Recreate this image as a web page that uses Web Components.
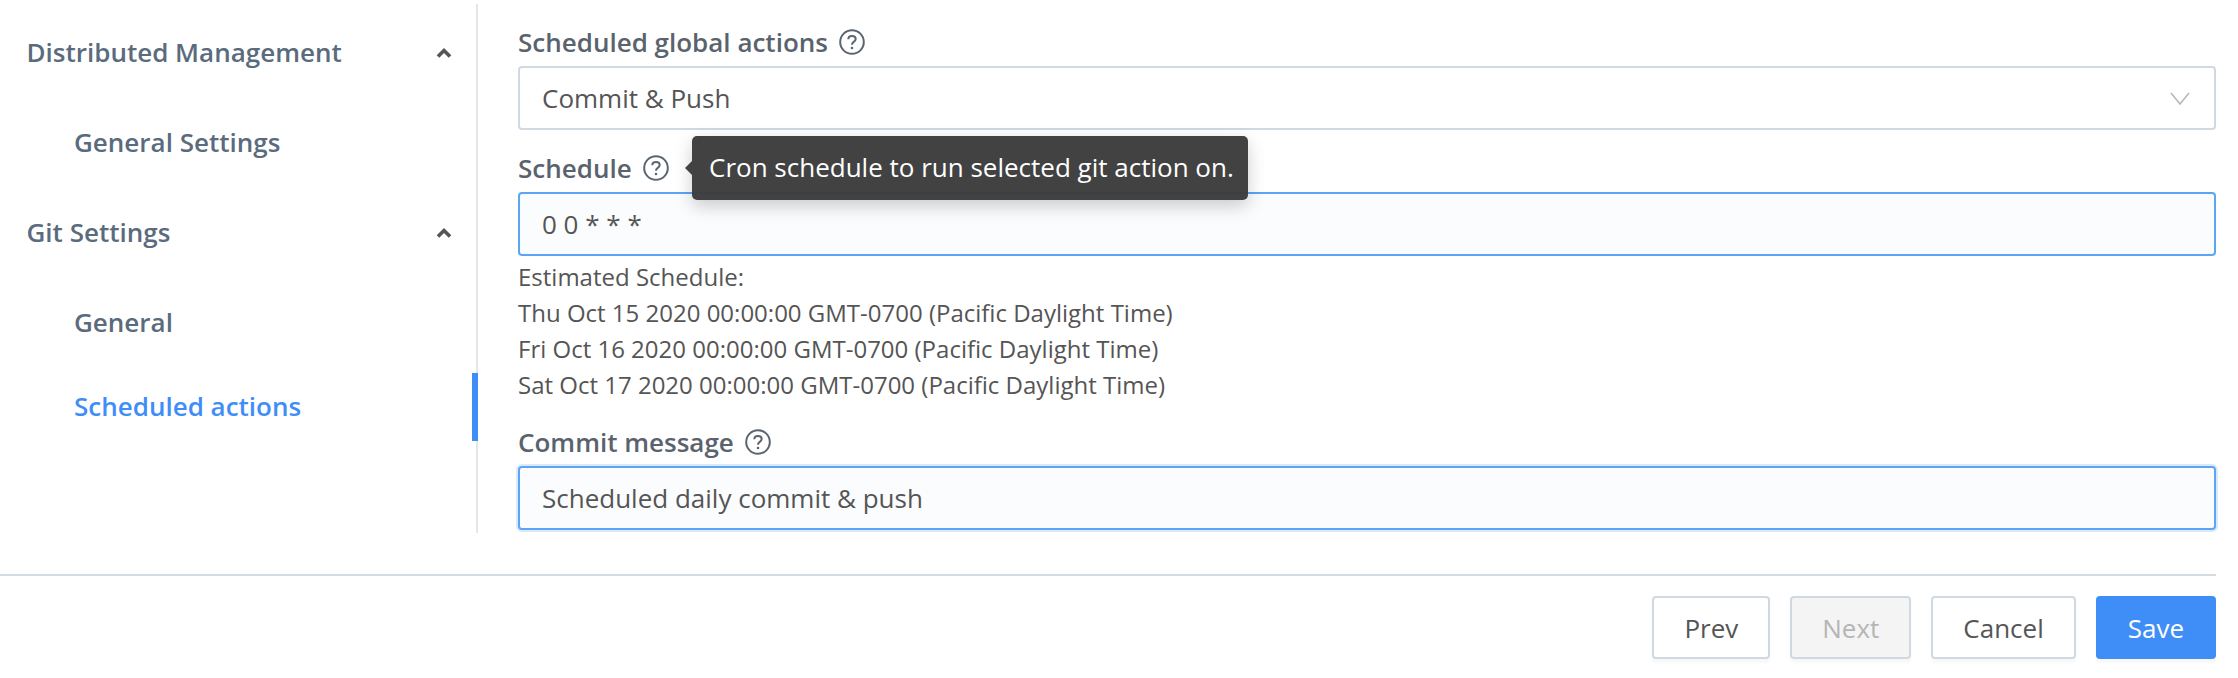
<!DOCTYPE html>
<html>
<head>
<meta charset="utf-8">
<title>Scheduled actions</title>
<style>
    html, body { margin: 0; background: #fff; }
    body { font-family: "Open Sans", "Noto Sans", sans-serif; }
</style>
</head>
<body>
<wizard-page>
    <side-nav slot="nav">
        <nav-group label="Distributed Management">
            <nav-item>General Settings</nav-item>
        </nav-group>
        <nav-group label="Git Settings">
            <nav-item>General</nav-item>
            <nav-item active>Scheduled actions</nav-item>
        </nav-group>
    </side-nav>
    <form-field slot="form" label="Scheduled global actions">
        <select-box>Commit &amp; Push</select-box>
    </form-field>
    <form-field slot="form" label="Schedule" tip="Cron schedule to run selected git action on.">
        <text-box>0 0 * * *</text-box>
        <schedule-list slot="after">
            <div>Estimated Schedule:</div>
            <div>Thu Oct 15 2020 00:00:00 GMT-0700 (Pacific Daylight Time)</div>
            <div>Fri Oct 16 2020 00:00:00 GMT-0700 (Pacific Daylight Time)</div>
            <div>Sat Oct 17 2020 00:00:00 GMT-0700 (Pacific Daylight Time)</div>
        </schedule-list>
    </form-field>
    <form-field slot="form" label="Commit message">
        <text-box glow>Scheduled daily commit &amp; push</text-box>
    </form-field>
    <wizard-button slot="footer">Prev</wizard-button>
    <wizard-button slot="footer" disabled>Next</wizard-button>
    <wizard-button slot="footer">Cancel</wizard-button>
    <wizard-button slot="footer" primary>Save</wizard-button>
</wizard-page>

<script>
class WizardPage extends HTMLElement {
    constructor() {
        super();
        this.attachShadow({ mode: 'open' }).innerHTML = `
            <style>
                :host { display: block; width: 2238px; height: 678px; overflow: hidden; }
                .body { display: flex; height: 529px; padding-top: 4px; }
                .form { flex: 1; padding: 20px 22px 0 40px; min-width: 0; }
                .line { height: 2px; margin: 41px 22px 0 0; background: #d3dbe3; }
                .footer {
                    display: flex;
                    justify-content: flex-end;
                    gap: 20px;
                    padding: 20px 22px 0 0;
                }
            </style>
            <div class="body">
                <slot name="nav"></slot>
                <div class="form"><slot name="form"></slot></div>
            </div>
            <div class="line"></div>
            <div class="footer"><slot name="footer"></slot></div>
        `;
    }
}

class SideNav extends HTMLElement {
    constructor() {
        super();
        this.attachShadow({ mode: 'open' }).innerHTML = `
            <style>
                :host {
                    display: block;
                    box-sizing: border-box;
                    flex: none;
                    width: 478px;
                    padding-top: 15px;
                    border-right: 2px solid #e6e6e6;
                }
            </style>
            <slot></slot>
        `;
    }
}

class NavGroup extends HTMLElement {
    constructor() {
        super();
        this.attachShadow({ mode: 'open' }).innerHTML = `
            <style>
                :host { display: block; margin-bottom: 22px; }
                .head {
                    display: flex;
                    align-items: center;
                    justify-content: space-between;
                    height: 68px;
                    padding: 0 24px 0 26.5px;
                    font-size: 26px;
                    font-weight: 600;
                    color: #5a6b7e;
                }
                .head span { padding-bottom: 3px; }
                svg { display: block; }
                .items { display: flex; flex-direction: column; gap: 16px; margin-top: 22px; }
            </style>
            <div class="head">
                <span>${this.getAttribute('label')}</span>
                <svg width="16" height="12" viewBox="0 0 16 12">
                    <path d="M2 9.5 L8 3.5 L14 9.5" fill="none" stroke="#565656" stroke-width="3.6"/>
                </svg>
            </div>
            <div class="items"><slot></slot></div>
        `;
    }
}

class NavItem extends HTMLElement {
    constructor() {
        super();
        const active = this.hasAttribute('active');
        this.attachShadow({ mode: 'open' }).innerHTML = `
            <style>
                :host { display: flex; height: 68px; margin-right: -2px; }
                .text {
                    flex: 1;
                    display: flex;
                    align-items: center;
                    padding: 0 0 3px 74px;
                    font-size: 26px;
                    font-weight: 600;
                    color: ${active ? '#3f8ef7' : '#5a6b7e'};
                }
                .bar { width: 6px; background: ${active ? '#3f8ef7' : 'transparent'}; }
            </style>
            <div class="text"><slot></slot></div>
            <div class="bar"></div>
        `;
    }
}

class HintIcon extends HTMLElement {
    constructor() {
        super();
        this.attachShadow({ mode: 'open' }).innerHTML = `
            <style>
                :host { display: block; width: 26px; height: 26px; flex: none; }
                svg { display: block; }
            </style>
            <svg width="26" height="26" viewBox="0 0 26 26" fill="none" stroke="#5b6570">
                <circle cx="13" cy="13" r="11.8" stroke-width="2"/>
                <path d="M9.3 10.2 C9.3 8 11 6.9 13 6.9 C15.1 6.9 16.7 8.1 16.7 10 C16.7 11.6 15.7 12.3 14.5 13.1 C13.4 13.8 13 14.4 13 15.7" stroke-width="2"/>
                <circle cx="13" cy="19" r="1.3" fill="#5b6570" stroke="none"/>
            </svg>
        `;
    }
}

class FormField extends HTMLElement {
    constructor() {
        super();
        const tip = this.getAttribute('tip');
        this.attachShadow({ mode: 'open' }).innerHTML = `
            <style>
                :host { display: block; margin-bottom: 20px; color: #555; }
                .label {
                    position: relative;
                    display: flex;
                    align-items: center;
                    gap: 11px;
                    height: 36px;
                    margin-bottom: 6px;
                    font-size: 26px;
                    font-weight: 600;
                    color: #5a636d;
                }
                .tip {
                    position: absolute;
                    left: 174px;
                    top: -14px;
                    box-sizing: border-box;
                    height: 64px;
                    padding: 0 14px 2px 17px;
                    display: flex;
                    align-items: center;
                    border-radius: 5px;
                    background: rgba(60, 60, 60, 0.97);
                    box-shadow: 0 6px 18px rgba(0, 0, 0, 0.2);
                    color: #fff;
                    font-size: 26px;
                    font-weight: 400;
                    white-space: nowrap;
                    z-index: 2;
                }
                .tip::before {
                    content: "";
                    position: absolute;
                    left: -7px;
                    top: 25px;
                    border-style: solid;
                    border-width: 7px 7px 7px 0;
                    border-color: transparent #424242 transparent transparent;
                }
            </style>
            <div class="label">
                <span>${this.getAttribute('label')}</span>
                <hint-icon></hint-icon>
                ${tip ? `<div class="tip">${tip}</div>` : ''}
            </div>
            <slot></slot>
            <slot name="after"></slot>
        `;
    }
}

class SelectBox extends HTMLElement {
    constructor() {
        super();
        this.attachShadow({ mode: 'open' }).innerHTML = `
            <style>
                :host {
                    display: flex;
                    align-items: center;
                    justify-content: space-between;
                    box-sizing: border-box;
                    height: 64px;
                    padding: 0 24px 0 22px;
                    border: 2px solid #d0d9e1;
                    border-radius: 4px;
                    background: #fff;
                    font-size: 26px;
                    color: #555;
                }
                svg { display: block; }
            </style>
            <span><slot></slot></span>
            <svg width="20" height="13" viewBox="0 0 20 13">
                <path d="M1 1 L10 12 L19 1" fill="none" stroke="#b8b8b8" stroke-width="1.6"/>
            </svg>
        `;
    }
}

class TextBox extends HTMLElement {
    constructor() {
        super();
        const glow = this.hasAttribute('glow');
        this.attachShadow({ mode: 'open' }).innerHTML = `
            <style>
                :host {
                    display: flex;
                    align-items: center;
                    box-sizing: border-box;
                    height: 64px;
                    padding: 0 22px;
                    border: 2px solid #5aa5f5;
                    border-radius: 4px;
                    background: #fbfcfe;
                    font-size: 26px;
                    color: #555;
                    ${glow ? 'box-shadow: 0 0 0 2px #dce9fa;' : ''}
                }
            </style>
            <slot></slot>
        `;
    }
}

class ScheduleList extends HTMLElement {
    constructor() {
        super();
        this.attachShadow({ mode: 'open' }).innerHTML = `
            <style>
                :host {
                    display: block;
                    padding: 3px 0 1px;
                    font-size: 24px;
                    line-height: 36px;
                    color: #555;
                }
            </style>
            <slot></slot>
        `;
    }
}

class WizardButton extends HTMLElement {
    constructor() {
        super();
        const primary = this.hasAttribute('primary');
        const disabled = this.hasAttribute('disabled');
        let look = 'background: #fff; color: #555; border-color: #d0d9e1;';
        if (primary) look = 'background: #3f8ef7; color: #fff; border-color: #3f8ef7;';
        if (disabled) look = 'background: #f4f4f4; color: #b5b5b5; border-color: #d0d9e1;';
        this.attachShadow({ mode: 'open' }).innerHTML = `
            <style>
                :host {
                    display: flex;
                    align-items: center;
                    box-sizing: border-box;
                    height: 63px;
                    padding: 0 30px;
                    border: 2px solid;
                    border-radius: 4px;
                    box-shadow: 0 4px 3px rgba(0, 0, 0, 0.03);
                    font-size: 26px;
                    ${look}
                }
            </style>
            <slot></slot>
        `;
    }
}

customElements.define('wizard-page', WizardPage);
customElements.define('side-nav', SideNav);
customElements.define('nav-group', NavGroup);
customElements.define('nav-item', NavItem);
customElements.define('hint-icon', HintIcon);
customElements.define('form-field', FormField);
customElements.define('select-box', SelectBox);
customElements.define('text-box', TextBox);
customElements.define('schedule-list', ScheduleList);
customElements.define('wizard-button', WizardButton);
</script>
</body>
</html>
